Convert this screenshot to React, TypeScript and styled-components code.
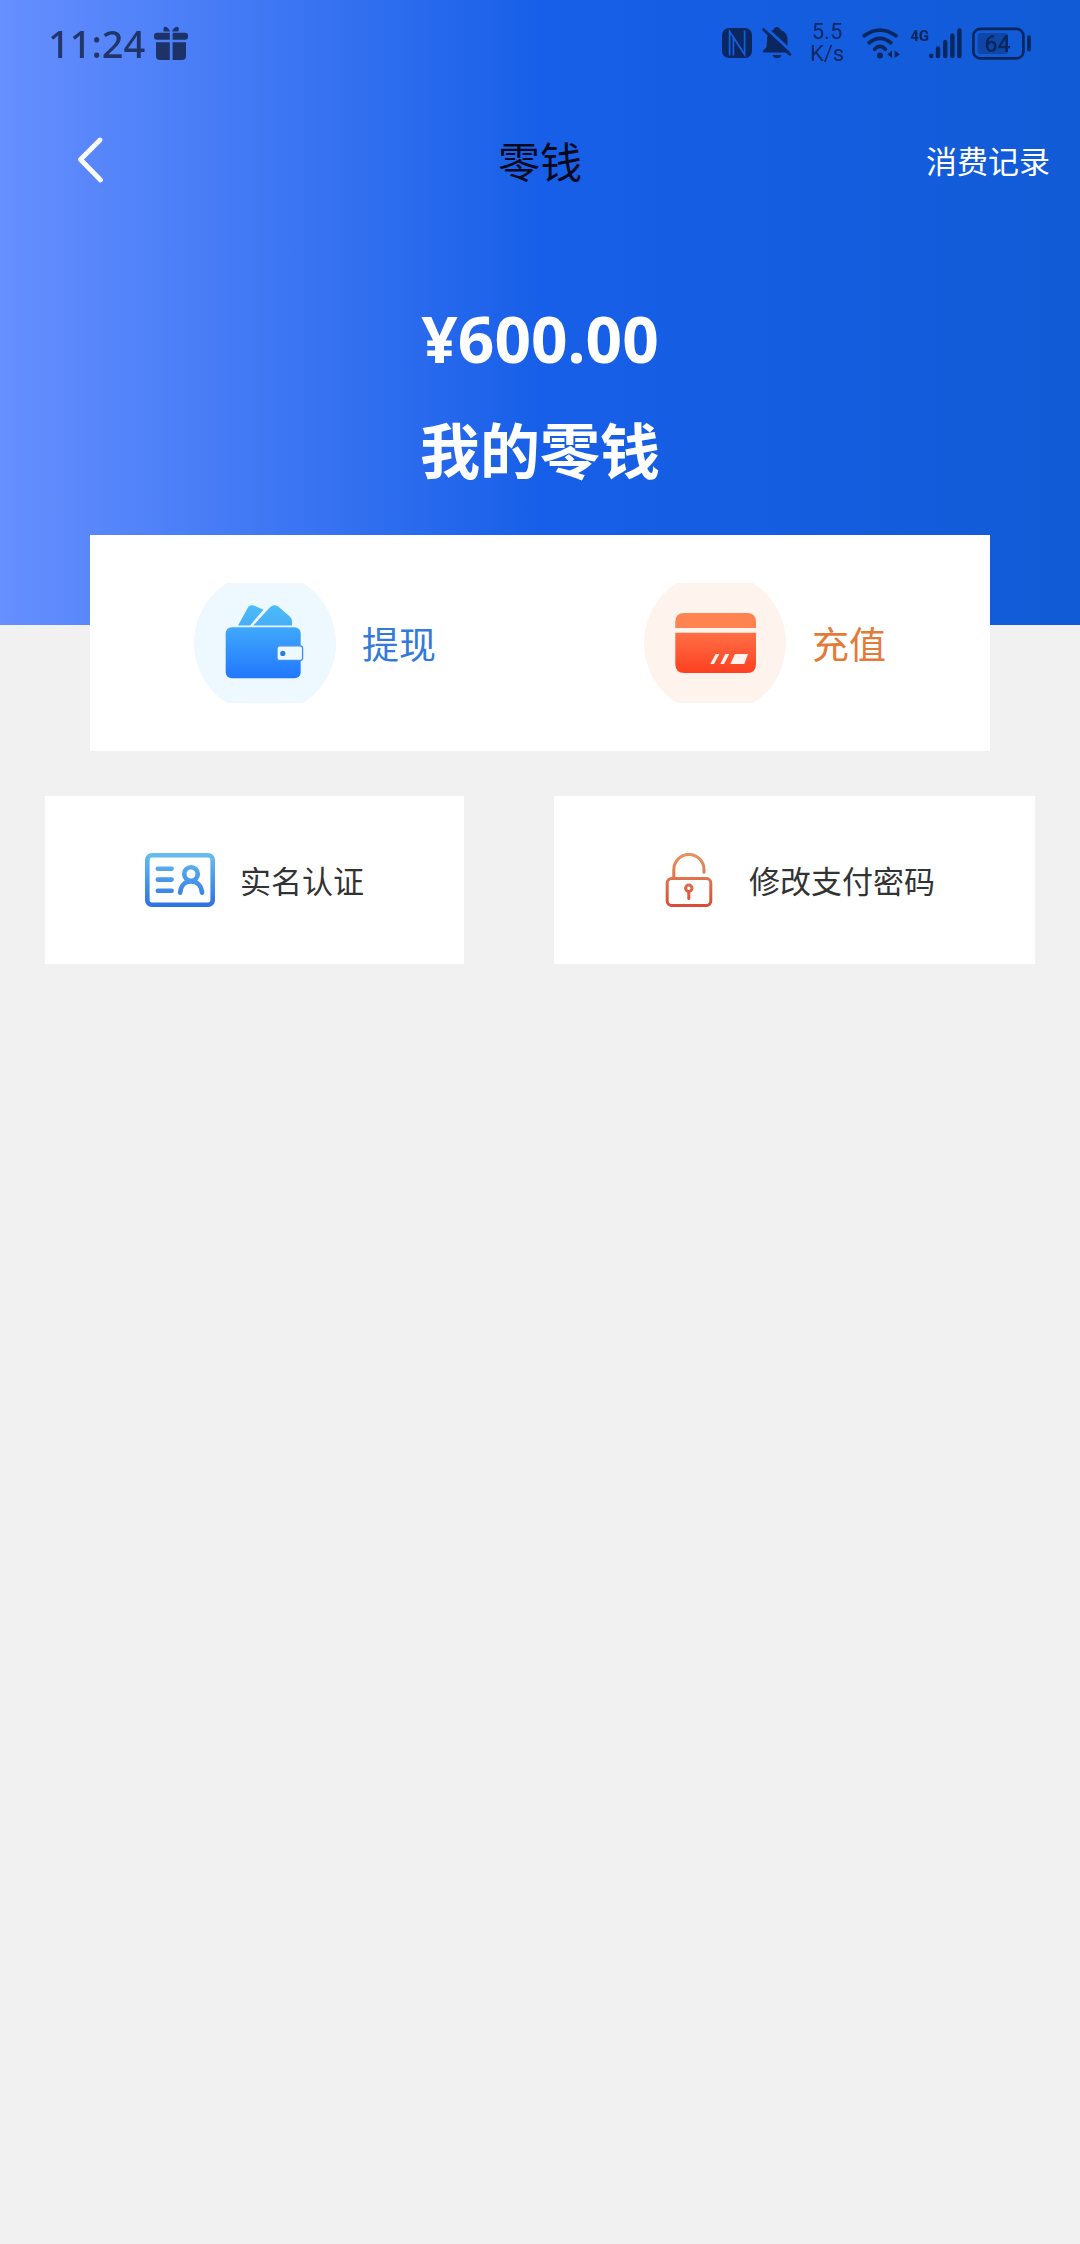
import React from 'react';
import styled, { createGlobalStyle } from 'styled-components';

const GlobalStyle = createGlobalStyle`
  *, *::before, *::after { box-sizing: border-box; }
  html, body, #root { min-height: 100%; }
  body {
    margin: 0;
    background: #f1f1f1;
    color: #333;
    font-family: "Noto Sans CJK SC", "Noto Sans", sans-serif;
  }
  button {
    border: 0;
    padding: 0;
    background: none;
    color: inherit;
    font: inherit;
    cursor: pointer;
  }
  h1, p { margin: 0; }
  svg { display: block; flex: none; }
`;

const Hero = styled.header`
  padding-bottom: 118px;
  color: #fff;
  background: linear-gradient(90deg, #668fff 0%, #175fe8 50%, #115bd6 100%);
`;

const StatusBar = styled.div`
  display: flex;
  justify-content: space-between;
  align-items: center;
  height: 86px;
  padding: 0 48px;
  color: #050c1e;
  opacity: 0.66;
`;

const StatusGroup = styled.div<{ $gap: number }>`
  display: flex;
  align-items: center;
  gap: ${(p) => p.$gap}px;
`;

const Clock = styled.time`
  font-family: "Noto Sans", sans-serif;
  font-size: 38px;
  line-height: 48px;
  font-weight: 500;
`;

const Speed = styled.div`
  display: grid;
  margin: 0 8px;
  font-family: Roboto, "Noto Sans", sans-serif;
  font-size: 22px;
  line-height: 22px;
  text-align: center;
`;

const Network = styled.div`
  display: flex;
  align-items: flex-start;
  font-family: Roboto, "Noto Sans", sans-serif;
  font-size: 15px;
  line-height: 16px;
  font-weight: 800;
`;

const NavBar = styled.nav`
  display: grid;
  grid-template-columns: 1fr auto 1fr;
  align-items: center;
  height: 148px;
  padding: 0 30px;
`;

const BackButton = styled.button`
  justify-self: start;
  display: grid;
  place-items: center;
  width: 120px;
  height: 88px;
`;

const Title = styled.h1`
  color: #06091c;
  font-size: 42px;
  line-height: 60px;
  font-weight: 400;
`;

const RecordLink = styled.a`
  justify-self: end;
  color: #fff;
  font-size: 31px;
  line-height: 44px;
  text-decoration: none;
`;

const Balance = styled.section`
  padding-top: 49px;
  font-family: "Noto Sans", "Noto Sans CJK SC", sans-serif;
  text-align: center;
  font-weight: 700;
  line-height: 112px;
`;

const Amount = styled.p`
  font-size: 64px;
`;

const BalanceLabel = styled.p`
  font-size: 60px;
`;

const ActionCard = styled.section`
  display: grid;
  grid-template-columns: 1fr 1fr;
  margin: -90px 90px 0;
  padding: 48px 0;
  background: #fff;
`;

const ActionButton = styled.button<{ $color: string }>`
  display: flex;
  align-items: center;
  justify-content: center;
  gap: 26px;
  color: ${(p) => p.$color};
  font-size: 37px;
  line-height: 54px;
`;

const Tiles = styled.section`
  display: flex;
  gap: 90px;
  padding: 45px;
`;

const Tile = styled.button`
  flex: 1 1 auto;
  display: flex;
  align-items: center;
  justify-content: center;
  gap: 25px;
  height: 168px;
  background: #fff;
  font-size: 31px;
  line-height: 44px;
`;

const GiftIcon = () => (
  <svg width="34" height="34" viewBox="0 0 34 34" fill="currentColor" aria-hidden="true">
    <path d="M15.5 5.5 H9.5 Q9 2 10.5 .8 Q14 .5 16 5.5Z M18 5.5 H24.5 Q25.5 2 24 .8 Q20 .5 18 5.5Z" />
    <path d="M3 6.8 H15.8 V13.7 H3 Q0 13.7 0 10.7 V9.8 Q0 6.8 3 6.8Z M18.6 6.8 H31 Q34 6.8 34 9.8 V10.7 Q34 13.7 31 13.7 H18.6Z" />
    <path d="M2 16.2 H15.8 V34 H6 Q2 34 2 30Z M18.6 16.2 H32 V30 Q32 34 28 34 H18.6Z" />
  </svg>
);

const NfcIcon = () => (
  <svg width="30" height="30" viewBox="0 0 30 30" fill="none" aria-hidden="true">
    <rect width="30" height="30" rx="7" fill="currentColor" mask="url(#nfc-cut)" />
    <mask id="nfc-cut">
      <rect width="30" height="30" fill="#fff" />
      <path d="M7.6 27.5 V3.5 L19.5 21.5 M22.6 2.5 V26.5 L11.4 9.5 V27.5" stroke="#000" strokeWidth="1.7" />
    </mask>
  </svg>
);

const MutedBellIcon = () => (
  <svg width="30" height="32" viewBox="0 0 30 32" fill="none" aria-hidden="true">
    <mask id="bell-cut">
      <rect width="30" height="32" fill="#fff" />
      <path d="M3.5 .5 L31 26" stroke="#000" strokeWidth="3" />
    </mask>
    <g mask="url(#bell-cut)" fill="currentColor">
      <path d="M5 11 Q6 4.5 11.5 2.8 Q12.3 0 15 0 Q17.7 0 18.5 2.8 Q25.5 5.5 25.5 13 V20 L29 25.5 H.8 V24 L4.6 20Z" />
      <path d="M10.5 28 H19.5 Q18.5 31.3 15 31.3 Q11.5 31.3 10.5 28Z" />
    </g>
    <path d="M1.4 2.6 L28 27.4" stroke="currentColor" strokeWidth="2.8" strokeLinecap="round" />
  </svg>
);

const WifiIcon = () => (
  <svg width="38" height="31" viewBox="0 0 38 31" fill="none" aria-hidden="true">
    <g stroke="currentColor" strokeWidth="3.8" strokeLinecap="round">
      <path d="M2.2 7.8 Q18 -3.6 34 7.8" />
      <path d="M7.2 14.8 Q18 6 28.8 14.8" />
      <path d="M12.6 21.2 Q18 15.6 23.4 21.2" />
    </g>
    <circle cx="18" cy="27.4" r="3" fill="currentColor" />
    <path d="M25.2 26.3 L30 22.6 V30Z M32.6 22.6 L38 26.3 L32.6 30Z" fill="currentColor" />
  </svg>
);

const SignalIcon = () => (
  <svg width="33" height="31" viewBox="0 0 33 31" stroke="currentColor" strokeWidth="4.4" strokeLinecap="round" aria-hidden="true">
    <path d="M2.3 27.6 V28 M9 20.5 V28 M16.2 14 V28 M23.4 7.5 V28 M30.4 2.4 V28" />
  </svg>
);

const BatteryIcon = () => (
  <svg width="60" height="33" viewBox="0 0 60 33" fill="none" aria-label="64%">
    <rect x="5.7" y="6" width="30.3" height="21" rx="3" fill="currentColor" opacity="0.4" />
    <rect x="1.4" y="1.8" width="50" height="29.6" rx="7" stroke="currentColor" strokeWidth="2.7" />
    <path d="M57 10 V22.8" stroke="currentColor" strokeWidth="3.6" strokeLinecap="round" />
    <text x="25.5" y="25" textAnchor="middle" fill="currentColor" fontFamily="Roboto, sans-serif" fontSize="23" fontWeight="500">64</text>
  </svg>
);

const BackIcon = () => (
  <svg width="28" height="46" viewBox="0 0 28 46" fill="none" aria-hidden="true">
    <path d="M24 3 L4.5 22.5 L24.5 43" stroke="#fff" strokeWidth="4.8" strokeLinecap="round" strokeLinejoin="round" />
  </svg>
);

const WalletIcon = () => (
  <svg width="142" height="120" viewBox="0 0 142 120" aria-hidden="true">
    <defs>
      <linearGradient id="wallet-body" x1="0" y1="0" x2="0" y2="1">
        <stop offset="0" stopColor="#3fa8fb" />
        <stop offset="1" stopColor="#2277fd" />
      </linearGradient>
      <linearGradient id="wallet-notes" x1="0" y1="0" x2="0" y2="1">
        <stop offset="0" stopColor="#4abcfb" />
        <stop offset="1" stopColor="#48aef4" />
      </linearGradient>
    </defs>
    <circle cx="71" cy="60" r="71" fill="#edf8ff" />
    <path d="M44 42.4 L53.4 25.4 Q55.4 21.2 59.8 22.4 L69.4 26.8 L56 42.4Z" fill="url(#wallet-notes)" />
    <path d="M59.3 42.4 L75 25.2 Q80 19.8 85.4 24.4 L96 33.8 Q98 35.8 98 38.4 V42.4Z" fill="url(#wallet-notes)" />
    <rect x="31.7" y="44.3" width="75" height="51" rx="6" fill="url(#wallet-body)" />
    <rect x="83" y="62.8" width="25.6" height="14.6" rx="2.5" fill="#edf8ff" stroke="#3b8ef2" strokeWidth="1.3" />
    <circle cx="88.8" cy="70.4" r="2.6" fill="#2f7be0" />
  </svg>
);

const BankCardIcon = () => (
  <svg width="142" height="120" viewBox="0 0 142 120" aria-hidden="true">
    <defs>
      <linearGradient id="card-body" x1="0" y1="0" x2="0" y2="1">
        <stop offset="0" stopColor="#fe6f45" />
        <stop offset="1" stopColor="#fe4022" />
      </linearGradient>
    </defs>
    <circle cx="71" cy="60" r="71" fill="#fff3ee" />
    <path d="M31.3 45 V39 Q31.3 30 40.3 30 H103 Q112 30 112 39 V45Z" fill="#fe8350" />
    <path d="M31.3 49.8 H112 V81 Q112 90 103 90 H40.3 Q31.3 90 31.3 81Z" fill="url(#card-body)" />
    <path d="M66.3 81 L71.7 71 H75.3 L70 81Z M76.3 81 L81.3 71 H85.3 L80 81Z M86.3 81 L91 71 H104 L100.3 81Z" fill="#fff3ee" />
  </svg>
);

const IdCardIcon = () => (
  <svg width="70" height="54" viewBox="0 0 70 54" fill="none" aria-hidden="true">
    <defs>
      <linearGradient id="id-stroke" gradientUnits="userSpaceOnUse" x1="0" y1="0" x2="0" y2="54">
        <stop offset="0" stopColor="#66bff0" />
        <stop offset="1" stopColor="#2d70e2" />
      </linearGradient>
    </defs>
    <g stroke="url(#id-stroke)" strokeWidth="4.6" strokeLinecap="round">
      <rect x="2.3" y="2.3" width="65.4" height="49.4" rx="4.5" />
      <path d="M12.8 15.7 H26.6 M12.8 26.6 H26.6 M12.8 37.7 H26.6" />
      <circle cx="46" cy="21" r="6.8" />
      <path d="M35.2 39.6 C35.8 32.5 40 28.4 46 28.4 C52 28.4 56.4 32.5 57 39.6" />
    </g>
  </svg>
);

const LockIcon = () => (
  <svg width="70" height="54" viewBox="0 0 70 54" fill="none" aria-hidden="true">
    <defs>
      <linearGradient id="lock-stroke" gradientUnits="userSpaceOnUse" x1="0" y1="0" x2="0" y2="54">
        <stop offset="0" stopColor="#e8945f" />
        <stop offset="1" stopColor="#d84c38" />
      </linearGradient>
    </defs>
    <g stroke="url(#lock-stroke)" strokeWidth="3" strokeLinecap="round">
      <rect x="13.2" y="25.4" width="43.6" height="27" rx="4.5" />
      <path d="M19.8 24 V16.5 A15.1 15.1 0 0 1 50 16.5 V19.2" />
      <circle cx="34.8" cy="35.2" r="3.2" />
      <path d="M34.8 39 V45.4" />
    </g>
  </svg>
);

export default function App() {
  return (
    <>
      <GlobalStyle />
      <Hero>
        <StatusBar>
          <StatusGroup $gap={9}>
            <Clock>11:24</Clock>
            <GiftIcon />
          </StatusGroup>
          <StatusGroup $gap={10}>
            <NfcIcon />
            <MutedBellIcon />
            <Speed>
              <span>5.5</span>
              <span>K/s</span>
            </Speed>
            <WifiIcon />
            <Network>
              4G
              <SignalIcon />
            </Network>
            <BatteryIcon />
          </StatusGroup>
        </StatusBar>
        <NavBar>
          <BackButton type="button" aria-label="返回">
            <BackIcon />
          </BackButton>
          <Title>零钱</Title>
          <RecordLink href="#records">消费记录</RecordLink>
        </NavBar>
        <Balance>
          <Amount>¥600.00</Amount>
          <BalanceLabel>我的零钱</BalanceLabel>
        </Balance>
      </Hero>
      <main>
        <ActionCard>
          <ActionButton type="button" $color="#3579da">
            <WalletIcon />
            提现
          </ActionButton>
          <ActionButton type="button" $color="#e37a38">
            <BankCardIcon />
            充值
          </ActionButton>
        </ActionCard>
        <Tiles>
          <Tile type="button">
            <IdCardIcon />
            实名认证
          </Tile>
          <Tile type="button">
            <LockIcon />
            修改支付密码
          </Tile>
        </Tiles>
      </main>
    </>
  );
}
